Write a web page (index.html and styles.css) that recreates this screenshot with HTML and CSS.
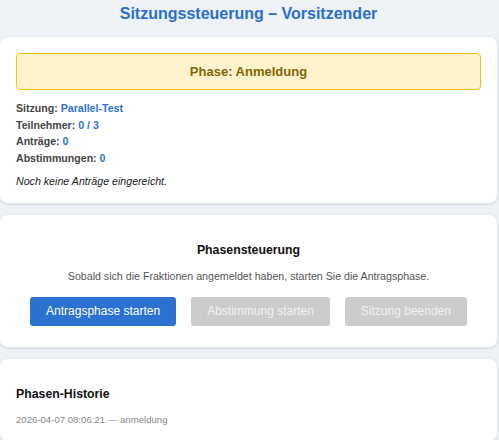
FILE: index.html
```html
<!DOCTYPE html>
<html lang="de">
<head>
<meta charset="utf-8">
<title>Sitzungssteuerung – Vorsitzender</title>
<link rel="stylesheet" href="styles.css">
</head>
<body>
<main class="page">
  <h1 class="title">Sitzungssteuerung – Vorsitzender</h1>

  <section class="card">
    <div class="phase-box">Phase: Anmeldung</div>
    <div class="info-line"><span class="label">Sitzung:</span> <span class="value">Parallel-Test</span></div>
    <div class="info-line"><span class="label">Teilnehmer:</span> <span class="value">0 / 3</span></div>
    <div class="info-line"><span class="label">Anträge:</span> <span class="value">0</span></div>
    <div class="info-line"><span class="label">Abstimmungen:</span> <span class="value">0</span></div>
    <p class="note">Noch keine Anträge eingereicht.</p>
  </section>

  <section class="card card-center">
    <h3 class="card-heading">Phasensteuerung</h3>
    <p class="hint">Sobald sich die Fraktionen angemeldet haben, starten Sie die Antragsphase.</p>
    <div class="actions">
      <button class="btn btn-primary">Antragsphase starten</button>
      <button class="btn btn-disabled" disabled>Abstimmung starten</button>
      <button class="btn btn-disabled" disabled>Sitzung beenden</button>
    </div>
  </section>

  <section class="card">
    <h3 class="card-heading">Phasen-Historie</h3>
    <div class="history-entry">2026-04-07 08:06:21 — anmeldung</div>
  </section>
</main>
</body>
</html>
```

FILE: styles.css
```css
html, body {
  margin: 0;
  padding: 0;
  background: #eef2f7;
  font-family: "Liberation Sans", Arial, sans-serif;
  color: #333;
}

.page {
  padding: 0 2px 0 0;
}

.title {
  margin: 0 0 14px;
  padding-top: 5px;
  font-size: 16px;
  line-height: 18px;
  font-weight: bold;
  color: #2b6fcc;
  text-align: center;
}

.card {
  background: #fff;
  border-radius: 8px;
  box-shadow: 0 1px 4px rgba(0, 0, 0, 0.1);
  padding: 16px;
  margin-bottom: 12px;
}

.card-center {
  text-align: center;
}

.phase-box {
  background: #fff3cd;
  border: 1px solid #ffc107;
  border-radius: 4px;
  padding: 10px;
  font-size: 13px;
  line-height: 15px;
  font-weight: bold;
  color: #856404;
  text-align: center;
  margin-bottom: 10px;
}

.info-line {
  font-size: 10.6px;
  line-height: 16.5px;
  font-weight: bold;
}

.label {
  color: #444;
}

.value {
  color: #2b72d4;
}

.note {
  margin: 9px 0 0;
  font-size: 10.65px;
  line-height: 12px;
  font-style: italic;
  color: #222;
}

.card-heading {
  margin: 12.3px 0;
  font-size: 12.3px;
  line-height: 14px;
  font-weight: bold;
  color: #111;
}

.hint {
  margin: 12.3px 0 10.5px;
  font-size: 10.65px;
  line-height: 12px;
  color: #555;
}

.actions {
  display: flex;
  justify-content: center;
  gap: 15px;
  padding: 5px 0;
}

.btn {
  font-family: "Liberation Sans", Arial, sans-serif;
  font-size: 12px;
  line-height: 13px;
  padding: 8px 16px;
  border: none;
  border-radius: 3px;
}

.btn-primary {
  background: #2b72d0;
  color: #fff;
}

.btn-disabled {
  background: #cccccc;
  color: #f2f2f2;
}

.history-entry {
  font-size: 9.6px;
  line-height: 11px;
  color: #888;
}
```
